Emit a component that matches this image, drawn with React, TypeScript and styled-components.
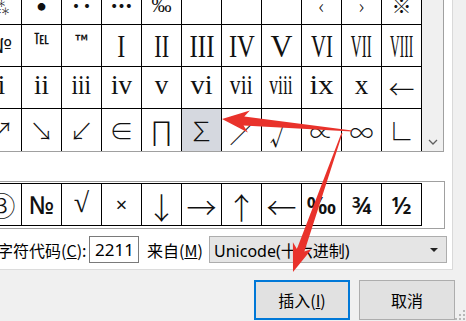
import React from 'react';
import styled, {createGlobalStyle} from 'styled-components';

const SERIF = '"Liberation Serif", "DejaVu Serif", serif';
const CJK = '"Noto Sans CJK SC", sans-serif';
const UI = '"Noto Sans", "Noto Sans CJK SC", sans-serif';

const GlobalStyle = createGlobalStyle`
  html, body {
    margin: 0;
    padding: 0;
  }
  body {
    width: 466px;
    height: 321px;
    overflow: hidden;
    background: #f0f0f0;
    font-family: ${UI};
    color: #000;
  }
`;

const Window = styled.div`
  position: relative;
  width: 466px;
  height: 321px;
  overflow: hidden;
  background: #f0f0f0;
  display: flex;
  flex-direction: column;
`;

const TabPage = styled.div`
  width: 452px;
  height: 269px;
  background: #fff;
  border-right: 1px solid #d9d9d9;
  border-bottom: 1px solid #dcdcdc;
  display: flex;
  flex-direction: column;
  flex-shrink: 0;
`;

const SymbolBox = styled.div`
  display: flex;
  align-self: flex-start;
  margin: -18px 0 0 -19px;
  border: 1px solid #a0a0a0;
`;

const SymbolGrid = styled.div`
  display: grid;
  grid-template-columns: repeat(11, 39px);
  grid-template-rows: 41px 41px 41px 42px;
  gap: 1px;
  background: #000;
`;

const Cell = styled.div<{ $selected?: boolean }>`
  display: flex;
  align-items: center;
  justify-content: center;
  overflow: hidden;
  background: ${p => (p.$selected ? '#d5d8df' : '#fff')};
`;

const Glyph = styled.span<{ $font: string; $size: number; $sx: number; $dy: number; $weight: number }>`
  display: inline-block;
  font-family: ${p => p.$font};
  font-size: ${p => p.$size}px;
  font-weight: ${p => p.$weight};
  line-height: 1;
  white-space: nowrap;
  color: #111;
  transform: translateY(${p => p.$dy}px) scaleX(${p => p.$sx});
`;

const ScrollBar = styled.div`
  width: 22px;
  border-left: 1px solid #000;
  background: #f0f0f0;
  display: flex;
  align-items: flex-end;
  justify-content: center;
  padding-bottom: 6px;
  box-sizing: border-box;
`;

const RecentBox = styled.div`
  align-self: flex-start;
  margin: 29px 0 0 -19px;
  padding: 1px 22px 2px 0;
  border: 1px solid #a0a0a0;
`;

const RecentRow = styled.div`
  display: flex;
  border-top: 1px solid #000;
  border-bottom: 1px solid #000;
`;

const RecentCell = styled.div`
  width: 39px;
  height: 41px;
  border-right: 1px solid #000;
  display: flex;
  align-items: center;
  justify-content: center;
  overflow: hidden;
`;

const CodeRow = styled.div`
  display: flex;
  align-items: center;
  height: 27px;
  margin: 7px 0 0 -3px;
  font-family: ${CJK};
  font-size: 16px;
`;

const Label = styled.span<{ $width: number }>`
  width: ${p => p.$width}px;
  flex-shrink: 0;
  white-space: nowrap;
`;

const CodeInput = styled.div`
  width: 50px;
  height: 27px;
  box-sizing: border-box;
  border: 1px solid #7a7a7a;
  margin-right: 8px;
  display: flex;
  align-items: center;
  padding-left: 5px;
  font-family: ${UI};
  font-size: 17px;
`;

const Select = styled.div`
  width: 238px;
  height: 27px;
  box-sizing: border-box;
  border: 1px solid #adadad;
  background: #e5e5e5;
  display: flex;
  align-items: center;
  justify-content: space-between;
  padding: 0 8px 0 4px;
  font-family: ${UI}, ${CJK};
  font-size: 16px;
`;

const Caret = styled.span`
  width: 0;
  height: 0;
  border-left: 4px solid transparent;
  border-right: 4px solid transparent;
  border-top: 4px solid #222;
`;

const ButtonRow = styled.div`
  display: flex;
  justify-content: flex-end;
  gap: 9px;
  margin-top: 10px;
  padding-right: 11px;
`;

const Button = styled.button<{ $primary?: boolean }>`
  width: 96px;
  height: 40px;
  box-sizing: border-box;
  background: #e1e1e1;
  border: ${p => (p.$primary ? '2px solid #0078d7' : '1px solid #adadad')};
  font-family: ${CJK};
  font-size: 16px;
  color: #000;
  padding: 0;
`;

const Overlay = styled.svg`
  position: absolute;
  left: 0;
  top: 0;
  pointer-events: none;
`;

const Grip = styled.svg`
  position: absolute;
  right: 0;
  bottom: 0;
`;

type Sym = { ch: string; font?: string; size?: number; sx?: number; dy?: number; weight?: number };

const up = (ch: string, sx: number): Sym => ({ ch, font: SERIF, size: 32, sx });
const lo = (ch: string, sx: number): Sym => ({ ch, font: SERIF, size: 27, sx, dy: -2 });
const cj = (ch: string, size = 24, dy = 0, weight = 300): Sym => ({ ch, font: CJK, size, dy, weight });

const grid: Sym[][] = [
  [cj('⁂', 18, 2), cj('•', 30, 1, 700), cj('‥', 22, 0, 900), cj('…', 22, 0, 900), { ch: '‰', font: SERIF, size: 20, dy: 1 }, cj(''), cj(''), cj(''), cj('‹', 20, 2), cj('›', 20, 2), cj('※', 20, 2)],
  [cj('№', 20, -1, 400), cj('℡', 15, -8, 500), cj('™', 17, -5, 500), up('I', 0.75), up('II', 0.7), up('III', 0.78), up('IV', 0.77), up('V', 0.95), up('VI', 0.65), up('VII', 0.47), up('VIII', 0.42)],
  [lo('i', 1), lo('ii', 1), lo('iii', 0.87), lo('iv', 1), lo('v', 1), lo('vi', 1.05), lo('vii', 0.8), lo('viii', 0.65), lo('ix', 1.15), lo('x', 1), cj('←', 26)],
  [cj('↗'), cj('↘'), cj('↙'), cj('∈'), cj('∏', 28, 0, 200), cj('∑', 26), cj('∕', 24, 3), cj('√', 24, 5), cj('∝', 24, 2), cj('∞', 24, 2), cj('∟')],
];

const recent: Sym[] = [
  cj('③', 28),
  { ch: '№', font: UI, size: 25, weight: 500 },
  { ch: '√', font: SERIF, size: 28, dy: -2 },
  { ch: '×', font: UI, size: 20 },
  cj('↓', 30, 1, 200),
  cj('→', 30, 1, 200),
  cj('↑', 30, 1, 200),
  cj('←', 30, 1, 200),
  { ch: '‰', font: UI, size: 24, weight: 600 },
  { ch: '¾', font: UI, size: 24, weight: 600 },
  { ch: '½', font: UI, size: 24, weight: 600 },
];

const renderGlyph = (s: Sym) => (
  <Glyph $font={s.font ?? CJK} $size={s.size ?? 24} $sx={s.sx ?? 1} $dy={s.dy ?? 0} $weight={s.weight ?? 400}>
    {s.ch}
  </Glyph>
);

// tapered callout arrow, computed from tail/tip
const arrowPoints = (tail: [number, number], tip: [number, number], headLen: number, headHalf: number, neckHalf: number, tailHalf: number) => {
  const dx = tip[0] - tail[0];
  const dy = tip[1] - tail[1];
  const len = Math.hypot(dx, dy);
  const ux = dx / len;
  const uy = dy / len;
  const nx = -uy;
  const ny = ux;
  const at = (a: number, b: number) => `${(tail[0] + ux * a + nx * b).toFixed(1)},${(tail[1] + uy * a + ny * b).toFixed(1)}`;
  const neck = len - headLen;
  return [
    at(0, -tailHalf),
    at(neck + 5, -neckHalf),
    at(neck, -headHalf),
    at(len, 0),
    at(neck, headHalf),
    at(neck + 5, neckHalf),
    at(0, tailHalf),
  ].join(' ');
};

const App: React.FC = () => {
  return (
    <Window>
      <GlobalStyle/>
      <TabPage>
        <SymbolBox>
          <SymbolGrid>
            {grid.map((row, r) =>
              row.map((s, c) => (
                <Cell key={`${r}-${c}`} $selected={r === 3 && c === 5}>
                  {s.ch && renderGlyph(s)}
                </Cell>
              ))
            )}
          </SymbolGrid>
          <ScrollBar>
            <svg width="10" height="6" viewBox="0 0 10 6">
              <polyline points="1,1 5,5 9,1" fill="none" stroke="#606060" strokeWidth="1.3"/>
            </svg>
          </ScrollBar>
        </SymbolBox>
        <RecentBox>
          <RecentRow>
            {recent.map((s, i) => (
              <RecentCell key={i}>{renderGlyph(s)}</RecentCell>
            ))}
          </RecentRow>
        </RecentBox>
        <CodeRow>
          <Label $width={92}>字符代码(<u>C</u>):</Label>
          <CodeInput>2211</CodeInput>
          <Label $width={62}>来自(<u>M</u>)</Label>
          <Select>
            <span>Unicode(十六进制)</span>
            <Caret/>
          </Select>
        </CodeRow>
      </TabPage>
      <ButtonRow>
        <Button $primary>插入(<u>I</u>)</Button>
        <Button>取消</Button>
      </ButtonRow>
      <Grip width="12" height="14" viewBox="0 0 12 14">
        {[[9, 3], [9, 7], [5, 7], [9, 11], [5, 11], [1, 11]].map(([x, y], i) => (
          <rect key={i} x={x} y={y} width="2" height="2" fill="#b8b8b8"/>
        ))}
      </Grip>
      <Overlay width="466" height="321" viewBox="0 0 466 321">
        <polygon points={arrowPoints([352, 131], [222, 119], 27, 11, 4.5, 0.6)} fill="#e9322b"/>
        <polygon points={arrowPoints([342, 133], [293, 272], 28, 10, 4, 0.5)} fill="#e9322b"/>
      </Overlay>
    </Window>
  );
};

export default App;
